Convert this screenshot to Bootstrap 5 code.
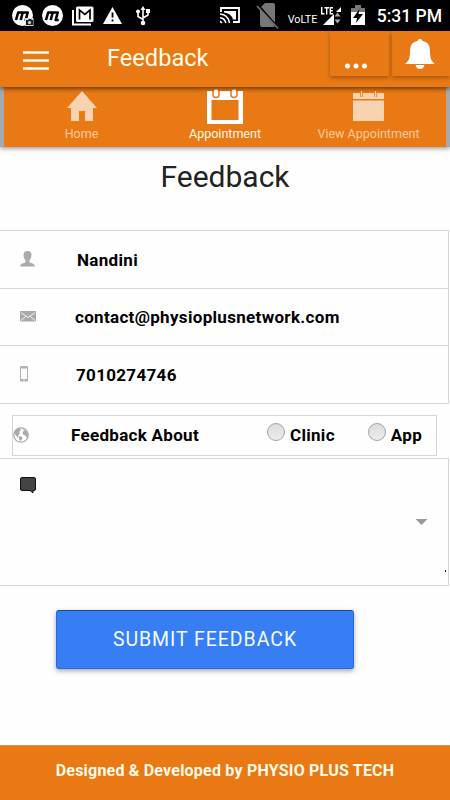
<!DOCTYPE html>
<html lang="en">
<head>
<meta charset="utf-8">
<meta name="viewport" content="width=device-width, initial-scale=1">
<title>Feedback</title>
<link href="https://cdn.jsdelivr.net/npm/bootstrap@5.3.0/dist/css/bootstrap.min.css" rel="stylesheet">
<style>
body{font-family:Roboto,"Noto Sans",sans-serif;width:450px;height:800px;overflow:hidden;background:#fefefe;color:#000}
svg{display:block;flex:none}
.statusbar{height:31px;background:#000;padding-left:12px;color:#fff}
.volte{font-size:10.800px;line-height:12px;margin:6px 2px 0 7px;width:29px;white-space:nowrap}
.clock{font-size:17.500px;font-weight:500;line-height:31px;margin-left:11px;padding-top:1px;white-space:nowrap}
.appbar{height:56px;background:#e97915;box-shadow:0 2px 4px rgba(0,0,0,.5);z-index:2;color:#fffbe6;padding:0}
.menu-btn{margin:20px 0 0 23px}
.app-title{font-size:23.600px;line-height:54px;margin-left:58px}
.tile{height:45px;box-shadow:0 2px 4px rgba(0,0,0,.28)}
.tile-more{width:59px;margin-right:3px;padding:32px 0 0 14px}
.tile-bell{width:58px;padding:8px 0 0 13px}
.tabs{height:60px;background:#e97915;border:solid #a9a9ab;border-width:0 4px;box-shadow:0 2px 4px rgba(0,0,0,.35)}
.tab-item{font-size:12.500px;line-height:17px;color:#f8c99d;white-space:nowrap}
.tab-side{flex:0 0 155px}
.tab-item.active{color:#fff9e6}
.tab-item svg{height:38px}
.page-title{font-size:30px;line-height:36px;margin:12px 0 0;height:71px;color:#222;font-weight:400}
.field-list{width:449px;border:solid #d6d6d6;border-width:1px 1px 0 0}
.field{height:57.600px;border-bottom:1px solid #d6d6d6;padding-left:20px;font-weight:700;font-size:17px;letter-spacing:.32px}
.field .glyph{width:57px}
.field .glyph-mail{width:55px}
.field .glyph-phone{width:56px}
.field-text{padding-top:2px}
.about{width:425px;height:41px;margin:11px 0 2px 12px;border:1px solid #d6d6d6;font-weight:700;font-size:17px;letter-spacing:.3px}
.about .glyph{width:58px}
.about input{appearance:none;width:18px;height:18px;border:1px solid #a3a3a3;border-radius:50%;background:linear-gradient(#dcdcdc,#ececec);margin:0 5px 7px 0;flex:none}
.app-opt{margin:0 14px 0 33px}
.comment{width:449px;height:128px;border:solid #d6d6d6;border-width:1px 1px 1px 0;padding:18px 20px}
.caret{margin-top:42px}
.endmark{right:2px;bottom:13px;width:1px;height:2px;background:#222}
.submit,.submit:hover{width:298px;height:59px;margin:24px 0 0 56px;background:#377ef5;border:1px solid #2c6ad8;border-top-color:#14489c;border-radius:3px;color:#f2fbff;font-size:19.500px;letter-spacing:.95px;box-shadow:0 2px 5px rgba(0,0,0,.35)}
.foot{height:55px;background:#e97915;border-top:1px solid #cf9359;color:#fffbe6;font-size:16px;letter-spacing:.21px;font-weight:700;padding-bottom:4px}
</style>
</head>
<body class="d-flex flex-column">
<div class="statusbar d-flex flex-shrink-0 align-items-start">
  <svg width="145" height="31" viewBox="0 0 145 31">
    <g fill="#fff"><circle cx="10.500" cy="15.500" r="10.500"/><circle cx="40.500" cy="15.500" r="10.500"/></g>
    <g fill="none" stroke="#000" stroke-width="2.600" stroke-linejoin="round"><path d="M4 20l2.200-7.500h4.500l-2 7.500M10.700 12.500h5l-2 7.500h3"/><path d="M34 20l2.200-7.500h4.500l-2 7.500M40.700 12.500h5l-2 7.500h3"/></g>
    <rect x="13" y="18" width="8.500" height="8" fill="#d8d8d8"/><path d="M14 20h2l1-1h2l1 1h1v5h-7z" fill="#222"/><circle cx="17.500" cy="22.500" r="1.500" fill="#ddd"/>
    <path d="M61 10v14.500h18" fill="none" stroke="#fff" stroke-width="2"/><rect x="64" y="6.500" width="17.500" height="15.500" rx="1.500" fill="#fff"/><path d="M67.500 19.500V10l5.300 4.500L78 10v9.500" fill="none" stroke="#000" stroke-width="1.700"/>
    <path d="M100.500 7l9.500 17H91z" fill="#fff"/><path d="M100.500 12.500v5M100.500 19.500v2" stroke="#000" stroke-width="1.800"/>
    <path d="M131 23V9M131 19.500l-5-3v-5M131 18l5-3v-4" stroke="#fff" stroke-width="1.600" fill="none"/><path d="M131 6l2.500 4h-5zM134 9h4v4h-4z" fill="#fff"/><circle cx="126" cy="11.500" r="2" fill="#fff"/><circle cx="131" cy="23" r="2.300" fill="#fff"/>
  </svg>
  <svg class="ms-auto" width="61" height="31" viewBox="0 0 61 31">
    <path d="M1 12V8h18v14h-6" fill="none" stroke="#fff" stroke-width="1.800"/><path d="M4 11h12v8.500h-3Q11 13 4 12.500z" fill="#fff"/><path d="M0 14q8 .500 9.500 9M0 17.700q5 .500 5.800 5.300M0 21l2 2" fill="none" stroke="#fff" stroke-width="1.600"/>
    <path d="M40 8l5-5h8q2 0 2 2v20q0 2-2 2H42q-2 0-2-2z" fill="#777"/><path d="M37 4l21 24" stroke="#000" stroke-width="2.500"/><path d="M37 6l21 22.500" stroke="#777" stroke-width="1.600"/>
  </svg>
  <span class="volte pt-2">VoLTE</span>
  <svg width="47" height="31" viewBox="0 0 47 31">
    <path d="M2.700 7v6.700H5.500M5.500 7.700h4.500M7.700 8v6.500M14 7.700h-2.700v6H14M11 10.700h2.700" fill="none" stroke="#fff" stroke-width="1.400"/>
    <path d="M22 7v18H4z" fill="#fff"/><path d="M15 12h7v13h-7z" fill="#000"/><path d="M18.500 12.500l3 4h-6zM18.500 23.500l-3-4h6z" fill="#aaa"/>
    <path d="M32 8h4V5h6v3h4v5H32z" fill="#777"/><path d="M32 12h14v13H32z" fill="#fff"/><path d="M40.500 9L34 18h4l-1 5 7-9h-4.500z" fill="#000"/>
  </svg>
  <span class="clock pe-2">5:31 PM</span>
</div>

<header class="appbar navbar flex-shrink-0 flex-nowrap align-items-start justify-content-start position-relative">
  <svg class="menu-btn" width="26" height="19" viewBox="0 0 26 19"><path d="M0 1.500h26M0 9.500h26M0 17.500h26" stroke="#fffbe6" stroke-width="2.400"/></svg>
  <span class="app-title">Feedback</span>
  <div class="tile tile-more ms-auto"><svg width="24" height="6" viewBox="0 0 24 6" fill="#fff"><circle cx="3.500" cy="3" r="2.500"/><circle cx="12" cy="3" r="2.500"/><circle cx="20.500" cy="3" r="2.500"/></svg></div>
  <div class="tile tile-bell"><svg width="30" height="31" viewBox="0 0 30 31" fill="#fff"><path d="M15 0q2 0 2.500 2Q25 3 25 12c0 8 1.500 10 5 13H0c3.500-3 5-5 5-13Q5 3 12.500 2 13 0 15 0zM10.500 26h9q-1 4-4.500 4t-4.500-4z"/></svg></div>
</header>

<nav class="tabs d-flex flex-shrink-0">
  <a class="tab-item tab-side d-flex flex-column align-items-center text-decoration-none"><svg width="30" height="38" viewBox="0 0 30 38" fill="#f8d3b2"><path d="M15 4l15 17h-4v13h-8V24h-6v10H4V21H0z"/></svg>Home</a>
  <a class="tab-item active col d-flex flex-column align-items-center text-decoration-none"><svg width="36" height="38" viewBox="0 0 36 38"><path d="M0 4h36v33H0zM4.500 13v20h27V13z" fill="#fff" fill-rule="evenodd"/><rect x="6" y="1.500" width="6" height="9" rx="3" fill="#fff" stroke="#e97915" stroke-width="1.500"/><rect x="24" y="1.500" width="6" height="9" rx="3" fill="#fff" stroke="#e97915" stroke-width="1.500"/></svg>Appointment</a>
  <a class="tab-item tab-side d-flex flex-column align-items-center text-decoration-none"><svg width="31" height="38" viewBox="0 0 31 38"><path d="M0 6h31v6H0zM0 13.500h31V34H0z" fill="#f8d3b2"/><path d="M8.500 4v6M22.500 4v6" stroke="#e97915" stroke-width="2.600"/><path d="M8.500 4v6M22.500 4v6" stroke="#f8d3b2" stroke-width="1.200"/></svg>View Appointment</a>
</nav>

<main class="flex-grow-1">
  <h1 class="page-title text-center">Feedback</h1>
  <div class="field-list">
    <div class="field d-flex align-items-center"><span class="glyph"><svg width="15" height="16" viewBox="0 0 15 16" fill="#aaa"><path d="M7.500 0q4 0 4 4 0 4-2 5.500v2Q15 12.500 15 15.500H0q0-3 5.500-4v-2q-2-1.500-2-5.500 0-4 4-4z"/></svg></span><span class="field-text">Nandini</span></div>
    <div class="field d-flex align-items-center"><span class="glyph glyph-mail"><svg width="16" height="11" viewBox="0 0 16 11"><path d="M0 0h16v10.500H0z" fill="#aaa"/><path d="M1 1.500l7 5 7-5M1 9.500l4.500-4M15 9.500l-4.500-4" stroke="#fff" stroke-width=".9" fill="none"/></svg></span><span class="field-text">contact@physioplusnetwork.com</span></div>
    <div class="field d-flex align-items-center"><span class="glyph glyph-phone"><svg width="8" height="16" viewBox="0 0 8 16"><rect width="8" height="15.500" rx="1" fill="#b0b0b0"/><path d="M1 2.500h6v10.500H1z" fill="#fff"/><path d="M3 14.300h2" stroke="#eee"/></svg></span><span class="field-text">7010274746</span></div>
  </div>
  <div class="about d-flex align-items-center">
    <span class="glyph"><svg width="16" height="16" viewBox="0 0 16 16"><circle cx="8" cy="8" r="7.200" fill="#fff" stroke="#aaa" stroke-width="1.300"/><path d="M1.500 5l2-3L7 1.500 8 3 6 5l1 1.500L5.500 8 5 11 2.500 8zM9.500 2l4 2 1.500 4-1.500 3-1-2.500-2.500-1L9.500 5l1.500-1zM6 9l3 1 .5 1.500L7.500 14 6 12z" fill="#aaa"/></svg></span>
    <span>Feedback About</span>
    <label class="d-flex align-items-center ms-auto"><input type="radio" name="about">Clinic</label>
    <label class="d-flex align-items-center app-opt"><input type="radio" name="about">App</label>
  </div>
  <div class="comment d-flex justify-content-between align-items-start position-relative">
    <svg width="16" height="17" viewBox="0 0 16 17"><path d="M2 .5h12q1.500 0 1.500 1.500v10q0 1.500-1.500 1.500h-1V16l-3-2.500H2Q.5 13.500.5 12V2Q.5.500 2 .5z" fill="#444" stroke="#111"/></svg>
    <svg class="caret" width="13" height="6" viewBox="0 0 13 6"><path d="M.5 0h12l-6 6z" fill="#999"/></svg>
    <span class="endmark position-absolute"></span>
  </div>
  <button class="submit btn d-flex align-items-center justify-content-center p-0">SUBMIT FEEDBACK</button>
</main>

<footer class="foot d-flex flex-shrink-0 align-items-center justify-content-center">Designed &amp; Developed by PHYSIO PLUS TECH</footer>
<script src="https://cdn.jsdelivr.net/npm/bootstrap@5.3.0/dist/js/bootstrap.bundle.min.js"></script>
</body>
</html>
